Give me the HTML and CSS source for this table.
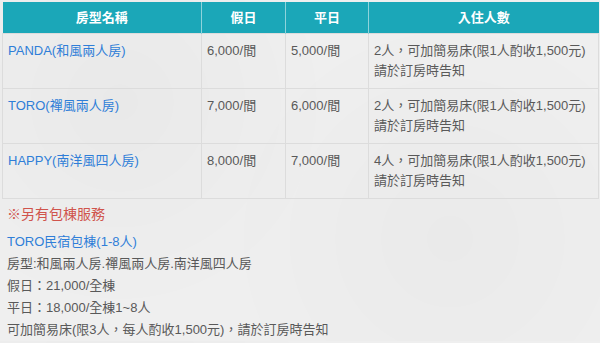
FILE: index.html
```html
<!DOCTYPE html>
<html lang="zh-Hant">
<head>
<meta charset="utf-8">
<title>房型價格</title>
<link rel="stylesheet" href="styles.css">
</head>
<body>
<div class="page">
  <table class="rooms">
    <colgroup>
      <col class="c-name"><col class="c-hol"><col class="c-week"><col class="c-guest">
    </colgroup>
    <thead>
      <tr><th>房型名稱</th><th>假日</th><th>平日</th><th>入住人數</th></tr>
    </thead>
    <tbody>
      <tr>
        <td><a class="link" href="#">PANDA(和風兩人房)</a></td>
        <td>6,000/間</td>
        <td>5,000/間</td>
        <td>2人，可加簡易床(限1人酌收1,500元)<br>請於訂房時告知</td>
      </tr>
      <tr>
        <td><a class="link" href="#">TORO(禪風兩人房)</a></td>
        <td>7,000/間</td>
        <td>6,000/間</td>
        <td>2人，可加簡易床(限1人酌收1,500元)<br>請於訂房時告知</td>
      </tr>
      <tr>
        <td><a class="link" href="#">HAPPY(南洋風四人房)</a></td>
        <td>8,000/間</td>
        <td>7,000/間</td>
        <td>4人，可加簡易床(限1人酌收1,500元)<br>請於訂房時告知</td>
      </tr>
    </tbody>
  </table>
  <div class="extra">
    <p class="notice">※另有包棟服務</p>
    <p class="pkg-title"><a class="link" href="#">TORO民宿包棟(1-8人)</a></p>
    <p class="line">房型:和風兩人房.禪風兩人房.南洋風四人房</p>
    <p class="line">假日：21,000/全棟</p>
    <p class="line">平日：18,000/全棟1~8人</p>
    <p class="line">可加簡易床(限3人，每人酌收1,500元)，請於訂房時告知</p>
  </div>
</div>
</body>
</html>
```
FILE: styles.css
```css
html, body {
  margin: 0;
  padding: 0;
}
body {
  background-color: #efefef;
  background-image:
    radial-gradient(circle at 20% 30%, rgba(0,0,0,0.025), transparent 40%),
    radial-gradient(circle at 75% 70%, rgba(0,0,0,0.02), transparent 45%);
  font-family: "Liberation Sans", Arial, "Noto Sans CJK TC", sans-serif;
  font-size: 13px;
  color: #595959;
  overflow: hidden;
}
.page {
  padding: 2px 2px 0 2px;
}
.rooms {
  width: 596px;
  border-collapse: collapse;
  table-layout: fixed;
}
.c-name { width: 199px; }
.c-hol { width: 84px; }
.c-week { width: 83px; }
.c-guest { width: 230px; }
.rooms th {
  background: #1ba7b8;
  color: #fff;
  font-weight: bold;
  text-align: center;
  height: 31px;
  padding: 0 5px;
  border-left: 1px solid #8fd3db;
  border-right: 1px solid #8fd3db;
  box-sizing: border-box;
  line-height: 17px;
}
.rooms th:first-child { border-left: 0; }
.rooms th:last-child { border-right: 0; }
.rooms td {
  border: 1px solid #dcdcdc;
  padding: 7px 5px;
  line-height: 20px;
  vertical-align: top;
  height: 40px;
}
.link {
  color: #2f7ed8;
  text-decoration: none;
}
.extra {
  padding: 0 5px;
}
.extra p {
  margin: 0;
}
.notice {
  color: #d0544c;
  font-size: 14px;
  line-height: 24px;
  margin-top: 3px !important;
}
.pkg-title {
  line-height: 22px;
  margin-top: 5px !important;
}
.line {
  line-height: 22px;
}
```
